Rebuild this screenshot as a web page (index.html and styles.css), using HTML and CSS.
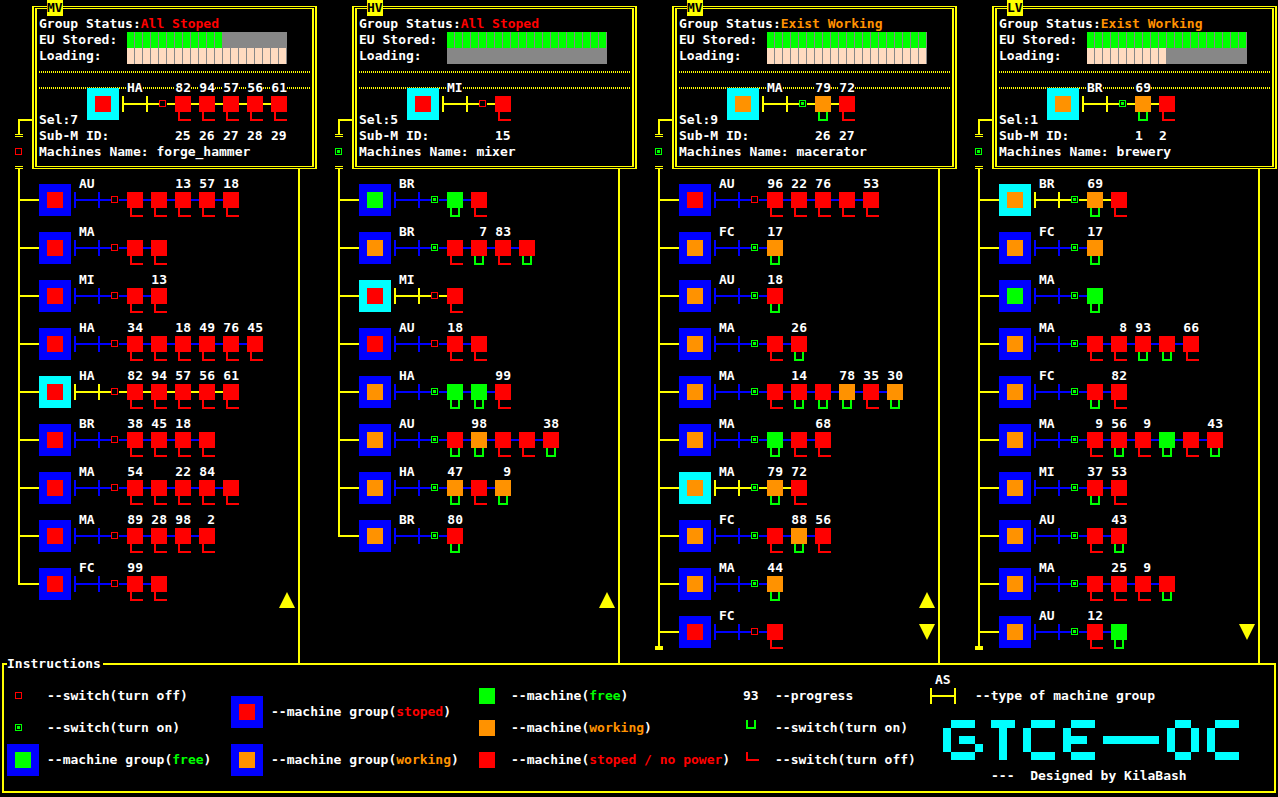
FILE: index.html
```
<!DOCTYPE html>
<html lang="en">
<head>
<meta charset="utf-8">
<meta name="viewport" content="width=device-width, initial-scale=1">
<title>GTCE-OC machine groups</title>
<link rel="stylesheet" href="styles.css">
</head>
<body>
<main class="board" id="board"></main>

<fieldset class="guide">
  <legend>Instructions</legend>
  <div class="guide-columns">
    <ul class="guide-list">
      <li><span class="key wide"><i class="switch off"></i></span>--switch(turn off)</li>
      <li><span class="key wide"><i class="switch on"></i></span>--switch(turn on)</li>
      <li><span class="key wide"><i class="node free"></i></span>--machine group(<em class="free">free</em>)</li>
    </ul>
    <ul class="guide-list spaced">
      <li><span class="key wide"><i class="node stopped"></i></span>--machine group(<em class="stopped">stoped</em>)</li>
      <li><span class="key wide"><i class="node working"></i></span>--machine group(<em class="working">working</em>)</li>
    </ul>
    <ul class="guide-list">
      <li><span class="key"><i class="block free"></i></span>--machine(<em class="free">free</em>)</li>
      <li><span class="key"><i class="block working"></i></span>--machine(<em class="working">working</em>)</li>
      <li><span class="key"><i class="block stopped"></i></span>--machine(<em class="stopped">stoped / no power</em>)</li>
    </ul>
    <ul class="guide-list">
      <li><span class="key">93</span>--progress</li>
      <li><span class="key"><i class="latch on"></i></span>--switch(turn on)</li>
      <li><span class="key"><i class="latch off"></i></span>--switch(turn off)</li>
    </ul>
    <div class="about">
      <div class="about-type">
        <span class="about-key"><span class="about-code">AS</span><i class="about-bar"></i></span>
        <span>--type of machine group</span>
      </div>
      <svg class="logo" viewBox="0 0 37 5" width="296" height="40" role="img" aria-label="GTCE-OC" shape-rendering="crispEdges">
        <path d="M1 0h3v1h-3zM0 1h1v3h-1zM2 2h2v1h-2zM4 3h1v1h-1zM1 4h3v1h-3z"/>
        <path d="M6 0h3v1h-3zM7 1h1v4h-1z"/>
        <path d="M11 0h3v1h-3zM10 1h1v3h-1zM11 4h3v1h-3z"/>
        <path d="M16 0h3v1h-3zM15 1h1v3h-1zM16 2h2v1h-2zM16 4h3v1h-3z"/>
        <path d="M20 2h7v1h-7z"/>
        <path d="M29 0h2v1h-2zM28 1h1v3h-1zM31 1h1v3h-1zM29 4h2v1h-2z"/>
        <path d="M34 0h3v1h-3zM33 1h1v3h-1zM34 4h3v1h-3z"/>
      </svg>
      <p class="credit">---  Designed by KilaBash</p>
    </div>
  </div>
</fieldset>
<script src="board.js"></script>
</body>
</html>
```
FILE: styles.css
```
:root {
  --line: #ffff00;
  --free: #00ff00;
  --working: #ff9200;
  --stopped: #ff0000;
  --wire: #0000ff;
  --picked: #00ffff;
  --empty: #878787;
  --load: #ffdbc0;
}

* { box-sizing: border-box; }

body {
  margin: 0;
  overflow-x: hidden;
  background: #000;
  color: #fff;
  font: bold 13px/16px "DejaVu Sans Mono", "Liberation Mono", monospace;
}

ul, ol, p { margin: 0; padding: 0; list-style: none; }
em, i { font-style: normal; }
button, input { margin: 0; padding: 0; border: 0; border-radius: 0; appearance: none; cursor: pointer; }

.board {
  display: grid;
  grid-template-columns: repeat(4, minmax(320px, 1fr));
}

/* one voltage tier */
.tier { display: flex; flex-direction: column; padding-top: 6px; }
.tier-head { display: flex; }

.rail {
  display: flex;
  flex-direction: column;
  width: 32px;
  padding: 113px 0 0 15px;
}
.rail-lead {
  height: 15px;
  margin-left: 3px;
  border-top: 2px solid var(--line);
  border-left: 2px solid var(--line);
}
.rail-gap {
  width: 8px;
  height: 3px;
  border: solid var(--line);
  border-width: 1px 0;
}
.rail .switch { margin: 11px 0; }

.card {
  position: relative;
  flex: 1;
  margin-right: 3px;
  padding: 7px 2px 6px;
  border: double var(--line);
  border-width: 3px 5px;
}
.card-tag {
  position: absolute;
  top: -9px;
  left: 10px;
  width: 16px;
  margin: 0;
  background: var(--line);
  color: #000;
  font: inherit;
}
.line { display: flex; height: 16px; white-space: nowrap; }
.line-label { width: 88px; }

.gauge { width: 160px; height: 16px; background: var(--empty); }
.gauge-fill { height: 16px; }
.gauge-fill.energy { background: repeating-linear-gradient(90deg, var(--free) 0 7px, var(--empty) 7px 8px); }
.gauge-fill.load { background: repeating-linear-gradient(90deg, var(--load) 0 7px, var(--empty) 7px 8px); }

.dots {
  background: repeating-linear-gradient(90deg, var(--line) 0 1px, transparent 1px 2px) 0 7px / 100% 2px no-repeat;
}
.choice { display: flex; height: 48px; }
.choice-label { align-self: flex-end; width: 48px; white-space: nowrap; }
.ids-label { width: 136px; }
.ids { display: flex; gap: 8px; }
.ids li { width: 16px; }

/* a machine group: node, type bar, switch, machines */
.group { display: flex; height: 48px; color: var(--wire); }
.group.picked { color: var(--line); }

.node {
  display: block;
  flex: none;
  width: 32px;
  height: 32px;
  border: 8px solid var(--wire);
  background: currentColor;
}
.group .node { margin-top: 8px; }
.picked .node { border-color: var(--picked); }

.type {
  width: 40px;
  padding-left: 8px;
  background:
    linear-gradient(currentColor, currentColor) 3px 16px / 2px 16px no-repeat,
    linear-gradient(currentColor, currentColor) 27px 16px / 2px 16px no-repeat,
    linear-gradient(currentColor, currentColor) 3px 23px / 37px 2px no-repeat;
}
.type-code { display: block; width: 16px; background: #000; color: #fff; }

.switch {
  display: block;
  flex: none;
  width: 7px;
  height: 7px;
  border: 1px solid var(--stopped);
  background: #000;
}
.switch.on, .switch:checked {
  border-color: var(--free);
  background: linear-gradient(var(--free), var(--free)) 1px 1px / 3px 3px no-repeat;
}
.group > .switch { margin: 20px 1px 0 0; }

.machines { display: flex; }
.machine {
  width: 24px;
  padding-left: 8px;
  background: linear-gradient(currentColor, currentColor) 0 23px / 8px 2px no-repeat;
}
.progress { display: block; width: 16px; height: 16px; color: #fff; text-align: right; }
.progress.shown { background: #000; }
.block { display: block; width: 16px; height: 16px; background: currentColor; }

.latch {
  display: block;
  width: 13px;
  height: 9px;
  margin-left: 3px;
  border: solid var(--stopped);
  border-width: 0 0 2px 2px;
  background: none;
}
.latch.on, .latch:checked { width: 10px; border-color: var(--free); border-right-width: 2px; }

.free { color: var(--free); }
.working { color: var(--working); }
.stopped { color: var(--stopped); }

/* the list that hangs from the card */
.tier-body {
  display: flex;
  flex: 1;
  margin: 0 20px 0 15px;
  padding-right: 3px;
  border-right: 2px solid var(--line);
}
.groups {
  flex: 1;
  align-self: flex-start;
  padding: 7px 0 0 3px;
  background: linear-gradient(var(--line), var(--line)) 3px 0 / 2px calc(100% - 23px) no-repeat;
}
.groups.more {
  margin-bottom: 7px;
  background:
    linear-gradient(var(--line), var(--line)) 3px 0 / 2px calc(100% - 6px) no-repeat,
    linear-gradient(var(--line), var(--line)) 0 calc(100% - 6px) / 8px 4px no-repeat;
}
.groups > li {
  padding-left: 21px;
  background: linear-gradient(var(--line), var(--line)) 0 23px / 21px 2px no-repeat;
}
.pager {
  display: flex;
  flex-direction: column;
  align-self: flex-end;
  gap: 16px;
  padding-bottom: 23px;
}
.arrow { width: 16px; height: 16px; background: var(--line); clip-path: polygon(50% 0, 100% 100%, 0 100%); }
.arrow.down { clip-path: polygon(0 0, 100% 0, 50% 100%); }
.arrow:disabled { visibility: hidden; }

/* key to the symbols */
.guide {
  min-width: 0;
  margin: -7px 2px 4px;
  padding: 0 3px 7px;
  border: 2px solid var(--line);
}
.guide legend { width: 96px; padding: 0; white-space: nowrap; background: #000; }
.guide-columns { display: grid; grid-template-columns: 224fr 248fr 264fr 187fr 341fr; }
.guide-list { padding-top: 8px; white-space: nowrap; }
.guide-list li { display: flex; align-items: center; height: 32px; }
.guide-list.spaced { display: flex; flex-direction: column; gap: 16px; padding-top: 24px; }
.key { flex: none; width: 32px; height: 16px; }
.key.wide { width: 40px; height: auto; }
.key .switch { margin: 0 0 1px 8px; }

.about-type { display: flex; align-items: flex-end; white-space: nowrap; }
.about-key { width: 45px; }
.about-code { display: block; padding-left: 5px; }
.about-bar {
  display: block;
  width: 26px;
  height: 16px;
  border: solid var(--line);
  border-width: 0 2px;
  background: linear-gradient(var(--line), var(--line)) 0 7px / 100% 2px no-repeat;
}
.logo { display: block; margin: 16px 0 8px 13px; fill: var(--picked); }
.credit { margin-left: 61px; white-space: pre; }
```
FILE: board.js
```
// Group: "<type> <state><switch> <machine>..."; machine: "<state><progress><switch>".
// State: f free, w working, s stopped. Switch: + on, - off. A leading * marks the picked group.
const tiers = [
  { name: 'MV', status: 'All Stoped', state: 'stopped', energy: 60, load: 100, sel: 7, on: false,
    firstId: 25, machineName: 'forge_hammer', up: true, down: false,
    groups: [
      'AU s- s- s- s13- s57- s18-',
      'MA s- s- s-',
      'MI s- s- s13-',
      'HA s- s34- s- s18- s49- s76- s45-',
      '*HA s- s82- s94- s57- s56- s61-',
      'BR s- s38- s45- s18- s-',
      'MA s- s54- s- s22- s84- s-',
      'MA s- s89- s28- s98- s2-',
      'FC s- s99- s-',
    ] },
  { name: 'HV', status: 'All Stoped', state: 'stopped', energy: 100, load: 0, sel: 5, on: true,
    firstId: 15, machineName: 'mixer', up: true, down: false,
    groups: [
      'BR f+ f+ s-',
      'BR w+ s- s7+ s83- s+',
      '*MI s- s-',
      'AU s- s18- s-',
      'HA w+ f+ f+ s99-',
      'AU w+ s+ w98+ s- s- s38+',
      'HA w+ w47+ s- w9+',
      'BR w+ s80+',
    ] },
  { name: 'MV', status: 'Exist Working', state: 'working', energy: 100, load: 100, sel: 9, on: true,
    firstId: 26, machineName: 'macerator', up: true, down: true,
    groups: [
      'AU s- s96- s22- s76- s- s53-',
      'FC w+ w17+',
      'AU w+ s18+',
      'MA w+ s- s26+',
      'MA w+ s- s14+ s+ w78+ s35- w30+',
      'MA w+ f+ s- s68-',
      '*MA w+ w79+ s72-',
      'FC w+ s- w88+ s56-',
      'MA w+ w44+',
      'FC s- s-',
    ] },
  { name: 'LV', status: 'Exist Working', state: 'working', energy: 100, load: 50, sel: 1, on: true,
    firstId: 1, machineName: 'brewery', up: false, down: true,
    groups: [
      '*BR w+ w69+ s-',
      'FC w+ w17+',
      'MA f+ f+',
      'MA w+ s- s8- s93+ s+ s66-',
      'FC w+ s+ s82-',
      'MA w+ s9- s56+ s9- f+ s- s43+',
      'MI w+ s37+ s53-',
      'AU w+ s- s43+',
      'MA w+ s- s25- s9- s+',
      'AU w+ s12- f+',
    ] },
];

const states = { f: 'free', w: 'working', s: 'stopped' };

function parse(token) {
  return { state: states[token[0]], value: token.slice(1, -1), on: token.endsWith('+') };
}

function toggle(kind, on, label) {
  return `<input type="checkbox" class="${kind}" aria-label="${label}"${on ? ' checked' : ''}>`;
}

function machine(token) {
  const m = parse(token);
  return `<li class="machine">
    <span class="progress${m.value ? ' shown' : ''}">${m.value}</span>
    <i class="block ${m.state}"></i>
    ${toggle('latch', m.on, 'Machine switch')}
  </li>`;
}

function group(text) {
  const [type, head, ...rest] = text.replace('*', '').split(' ');
  const g = parse(head);
  return `<div class="group${text[0] === '*' ? ' picked' : ''}">
    <button type="button" class="node ${g.state}" aria-label="Machine group ${type}"></button>
    <span class="type"><span class="type-code">${type}</span></span>
    ${toggle('switch', g.on, 'Group switch')}
    <ul class="machines">${rest.map(machine).join('')}</ul>
  </div>`;
}

function gauge(kind, value, label) {
  return `<div class="gauge" role="meter" aria-label="${label}" aria-valuenow="${value}">
    <div class="gauge-fill ${kind}" style="width:${value}%"></div></div>`;
}

function tier(t) {
  const picked = t.groups.find((g) => g[0] === '*');
  const count = picked.split(' ').length - 2;
  const ids = Array.from({ length: count }, (_, i) => `<li>${t.firstId + i}</li>`).join('');
  return `<section class="tier">
    <div class="tier-head">
      <div class="rail">
        <div class="rail-lead"></div>
        <div class="rail-gap"></div>
        ${toggle('switch', t.on, 'Tier switch')}
        <div class="rail-gap"></div>
      </div>
      <div class="card">
        <h2 class="card-tag">${t.name}</h2>
        <p class="line">Group Status:<em class="${t.state}">${t.status}</em></p>
        <div class="line"><span class="line-label">EU Stored:</span>${gauge('energy', t.energy, 'EU Stored')}</div>
        <div class="line"><span class="line-label">Loading:</span>${gauge('load', t.load, 'Loading')}</div>
        <div class="line dots"></div>
        <div class="choice dots"><span class="choice-label">Sel:${t.sel}</span>${group(picked)}</div>
        <div class="line"><span class="ids-label">Sub-M ID:</span><ul class="ids">${ids}</ul></div>
        <p class="line">Machines Name: ${t.machineName}</p>
      </div>
    </div>
    <div class="tier-body">
      <ul class="groups${t.down ? ' more' : ''}">${t.groups.map((g) => `<li>${group(g)}</li>`).join('')}</ul>
      <div class="pager">
        <button type="button" class="arrow up" aria-label="Scroll up"${t.up ? '' : ' disabled'}></button>
        <button type="button" class="arrow down" aria-label="Scroll down"${t.down ? '' : ' disabled'}></button>
      </div>
    </div>
  </section>`;
}

document.getElementById('board').innerHTML = tiers.map(tier).join('');
```
